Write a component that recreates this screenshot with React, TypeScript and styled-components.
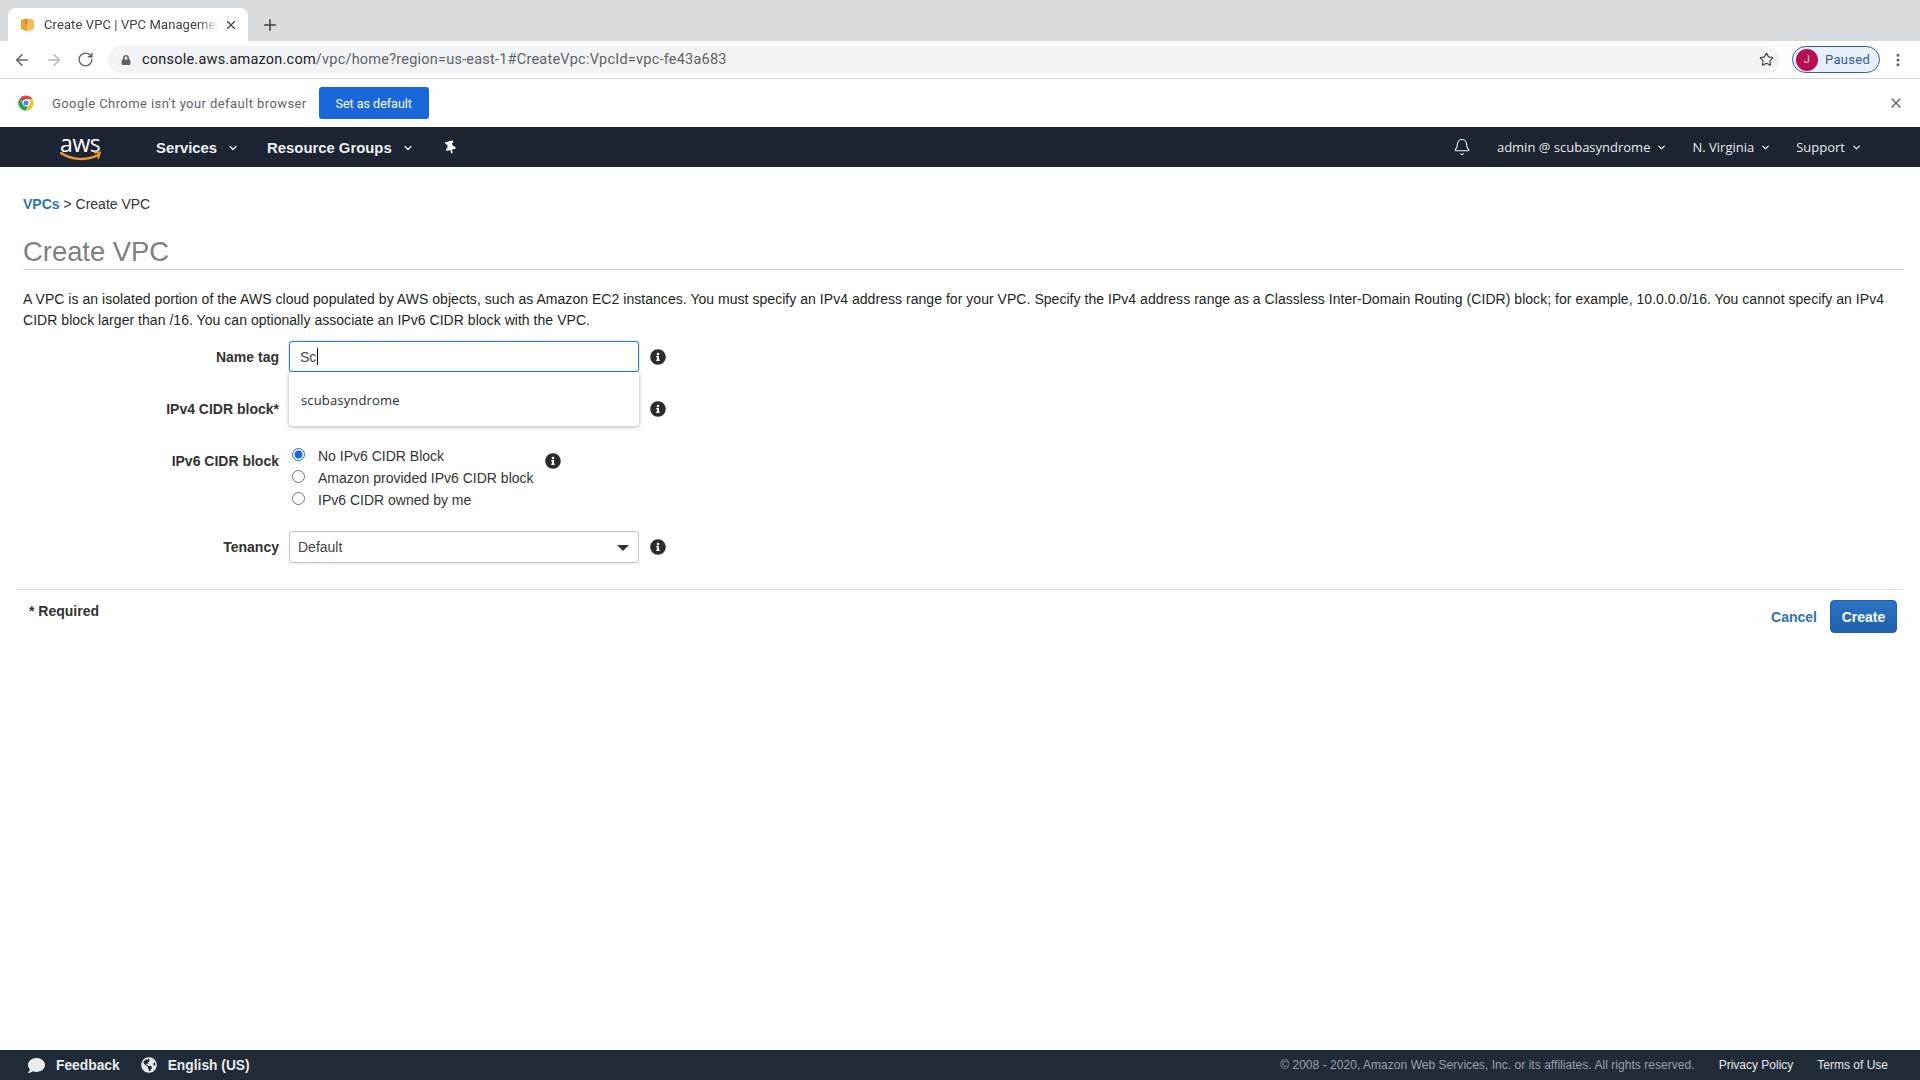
import React from "react";
import styled, { createGlobalStyle } from "styled-components";
import {
  ArrowLeft,
  ArrowRight,
  Bell,
  ChevronDown,
  EllipsisVertical,
  Plus,
  RotateCw,
  Star,
  X
} from "lucide-react";
import { FaComment, FaGlobeAmericas, FaInfoCircle, FaLock, FaThumbtack } from "react-icons/fa";

const GlobalStyle = createGlobalStyle`
  html, body {
    margin: 0;
    padding: 0;
    background: #fff;
  }
  body {
    font-family: "Liberation Sans", Arial, sans-serif;
    color: #16191f;
    font-size: 14px;
  }
  * {
    box-sizing: border-box;
  }
`;

const Page = styled.div`
  width: 1920px;
  height: 1080px;
  display: flex;
  flex-direction: column;
  overflow: hidden;
`;

/* browser chrome */

const TabStrip = styled.div`
  height: 41px;
  background: #d9dcde;
  display: flex;
  align-items: flex-end;
  padding-left: 8px;
  flex-shrink: 0;
`;

const Tab = styled.div`
  width: 240px;
  height: 33px;
  background: #fff;
  border-radius: 8px 8px 0 0;
  display: flex;
  align-items: center;
  padding: 0 10px 0 12px;
  color: #3c4043;
  font-family: Roboto, sans-serif;
  font-size: 13px;
`;

const TabTitle = styled.div`
  flex: 1;
  margin-left: 9px;
  margin-right: 5px;
  white-space: nowrap;
  overflow: hidden;
  letter-spacing: 0.1px;
  -webkit-mask-image: linear-gradient(90deg, #000 88%, transparent);
  mask-image: linear-gradient(90deg, #000 88%, transparent);
`;

const NewTab = styled.div`
  width: 44px;
  height: 33px;
  display: flex;
  align-items: center;
  justify-content: center;
  color: #3c4043;
`;

const Toolbar = styled.div`
  height: 38px;
  background: #fff;
  border-bottom: 1px solid #d6d8db;
  display: flex;
  align-items: center;
  padding: 0 14px 0 13px;
  flex-shrink: 0;
`;

const NavIcon = styled.div<{ $muted?: boolean }>`
  width: 32px;
  display: flex;
  align-items: center;
  justify-content: flex-start;
  color: ${p => (p.$muted ? "#b4b7bb" : "#5f6368")};
`;

const Omnibox = styled.div`
  width: 1672px;
  height: 27px;
  margin-left: -1px;
  background: #f1f3f4;
  border-radius: 14px;
  display: flex;
  align-items: center;
  padding: 0 6px 0 13px;
  font-family: Roboto, sans-serif;
  font-size: 14.5px;
  color: #5f6368;
  letter-spacing: 0.22px;
`;

const UrlText = styled.div`
  flex: 1;
  margin-left: 11px;
  strong {
    font-weight: 400;
    color: #202124;
  }
`;

const ProfilePill = styled.div`
  width: 88px;
  height: 27px;
  margin-left: 12px;
  border: 1px solid #3c5d93;
  border-radius: 14px;
  background: #e8f0fe;
  display: flex;
  align-items: center;
  padding-left: 3px;
  font-family: Roboto, sans-serif;
  font-size: 13px;
  color: #2f5a9c;
  letter-spacing: 0.3px;
  flex-shrink: 0;
`;

const Avatar = styled.div`
  width: 22px;
  height: 22px;
  border-radius: 50%;
  background: #b80f50;
  color: #f6c9da;
  font-size: 11px;
  display: flex;
  align-items: center;
  justify-content: center;
  margin-right: 7px;
`;

const MenuDots = styled.div`
  margin-left: 10px;
  display: flex;
  color: #5f6368;
`;

const InfoBar = styled.div`
  height: 48px;
  background: #fff;
  display: flex;
  align-items: center;
  padding: 0 16px 0 17px;
  font-family: Roboto, sans-serif;
  font-size: 13px;
  color: #5f6368;
  letter-spacing: 0.42px;
  flex-shrink: 0;
`;

const InfoText = styled.div`
  margin-left: 17px;
`;

const DefaultButton = styled.div`
  width: 110px;
  height: 32px;
  margin-left: 12px;
  border-radius: 3px;
  background: #1a67dc;
  color: #fff;
  font-size: 12.5px;
  font-weight: 400;
  letter-spacing: 0;
  display: flex;
  align-items: center;
  justify-content: center;
`;

const InfoClose = styled.div`
  margin-left: auto;
  display: flex;
  color: #5f6368;
`;

/* console nav */

const ConsoleNav = styled.div`
  height: 40px;
  background: #1d2432;
  color: #fff;
  display: flex;
  align-items: center;
  padding-left: 60px;
  flex-shrink: 0;
`;

const Logo = styled.div`
  width: 42px;
  height: 30px;
  position: relative;
  margin-right: 54px;
  font-family: "Open Sans", sans-serif;
  font-size: 23px;
  line-height: 22px;
  letter-spacing: -0.4px;
  color: #fff;
  svg {
    position: absolute;
    left: 0;
    bottom: 0;
  }
`;

const MainMenu = styled.div`
  font-weight: 700;
  font-size: 14.85px;
  display: flex;
  align-items: center;
  gap: 10px;
  margin-right: 28px;
  padding-top: 1px;
  color: #eef0f2;
`;

const PinIcon = styled.div`
  display: flex;
  margin-left: 2px;
  transform: rotate(-15deg);
`;

const NavRight = styled.div`
  margin-left: auto;
  display: flex;
  align-items: center;
  padding-right: 58px;
`;

const BellWrap = styled.div`
  display: flex;
  margin-right: 26px;
  color: #f2f3f5;
`;

const SideMenu = styled.div`
  font-family: "Open Sans", sans-serif;
  font-size: 13px;
  display: flex;
  align-items: center;
  gap: 6px;
  margin-right: 25px;
  color: #e6e8ea;
  &:last-child {
    margin-right: 0;
  }
`;

/* page body */

const Main = styled.div`
  flex: 1;
  padding: 0 16px 0 16px;
  display: flex;
  flex-direction: column;
`;

const Breadcrumb = styled.div`
  padding: 29px 0 0 7px;
  line-height: 16px;
  color: #333;
  a {
    color: #2b75ae;
    font-weight: 700;
    text-decoration: none;
  }
`;

const Title = styled.h1`
  margin: 23px 0 0 7px;
  height: 35px;
  border-bottom: 1px solid #c9cbcc;
  font-size: 27.4px;
  line-height: 33px;
  font-weight: 400;
  color: #7d7f81;
`;

const Intro = styled.p`
  margin: 19px 0 0 7px;
  line-height: 21px;
  color: #1d1f21;
  width: 1865px;
  letter-spacing: 0.04px;
`;

const Form = styled.div`
  margin-top: 10px;
  display: flex;
  flex-direction: column;
`;

const Row = styled.div<{ $mb: number }>`
  display: grid;
  grid-template-columns: 263px 350px auto;
  column-gap: 10px;
  margin-bottom: ${p => p.$mb}px;
  align-items: center;
`;

const Label = styled.label<{ $top?: boolean }>`
  font-weight: 700;
  text-align: right;
  color: #333;
  ${p => (p.$top ? "align-self: start; margin-top: 7px;" : "")}
`;

const Field = styled.div`
  position: relative;
  height: 31px;
`;

const TextInput = styled.div<{ $focus?: boolean }>`
  height: 31px;
  border-radius: 3px;
  border: 1px solid ${p => (p.$focus ? "#3d7fb8" : "#b8bcbf")};
  box-shadow: ${p => (p.$focus ? "0 0 2px rgba(61,127,184,.6)" : "none")};
  background: #fff;
  display: flex;
  align-items: center;
  padding-left: 10px;
  color: #444;
`;

const Caret = styled.span`
  display: inline-block;
  width: 1px;
  height: 17px;
  background: #111;
  margin-left: 1px;
`;

const Suggestions = styled.div`
  position: absolute;
  top: 31px;
  left: 0;
  right: 0;
  height: 54px;
  background: #fff;
  border-radius: 0 0 3px 3px;
  box-shadow: 0 1px 4px rgba(0, 0, 0, 0.3);
  padding: 19px 0 0 12px;
  font-family: "Open Sans", sans-serif;
  font-size: 13px;
  line-height: 18px;
  letter-spacing: 0.15px;
  color: #2a2c2e;
  z-index: 2;
`;

const InfoIcon = styled.div`
  display: flex;
  color: #2a2c2e;
  padding-left: 1px;
`;

const RadioCell = styled.div`
  grid-column: 2 / 4;
  display: flex;
  align-items: flex-start;
`;

const RadioList = styled.div`
  display: flex;
  flex-direction: column;
  margin-top: -1px;
`;

const RadioRow = styled.label`
  height: 22px;
  display: flex;
  align-items: center;
  color: #333;
`;

const Radio = styled.input`
  width: 13px;
  height: 13px;
  margin: -3px 13px 0 3px;
  accent-color: #1a67dc;
`;

const RadioInfo = styled(InfoIcon)`
  margin: 7px 0 0 10px;
`;

const SelectBox = styled(TextInput)`
  height: 32px;
  padding-left: 8px;
  padding-right: 9px;
  justify-content: space-between;
  border-color: #c1c4c6;
  box-shadow: 0 1px 1px rgba(0, 0, 0, 0.08);
`;

const SelectArrow = styled.span`
  width: 0;
  height: 0;
  border-left: 6px solid transparent;
  border-right: 6px solid transparent;
  border-top: 6px solid #333;
  margin-top: 2px;
`;

const FormFooter = styled.div`
  margin-top: 26px;
  border-top: 1px solid #dcdedf;
  display: flex;
  justify-content: space-between;
  padding: 10px 7px 0 13px;
`;

const Required = styled.div`
  font-weight: 700;
  color: #333;
  margin-top: 3px;
  line-height: 16px;
`;

const Actions = styled.div`
  display: flex;
  align-items: center;
  gap: 13px;
`;

const CancelLink = styled.a`
  color: #2b75ae;
  font-weight: 700;
  font-size: 14px;
`;

const CreateButton = styled.button`
  width: 67px;
  height: 33px;
  border: 1px solid #1f5fa8;
  border-radius: 4px;
  background: linear-gradient(#2b74c4, #1f5fae);
  color: #fff;
  font-family: inherit;
  font-weight: 700;
  font-size: 14px;
  padding: 0;
`;

/* console footer */

const Footer = styled.div`
  height: 30px;
  background: #222b38;
  display: flex;
  align-items: center;
  padding: 0 32px 0 28px;
  flex-shrink: 0;
  font-size: 12px;
  color: #fff;
`;

const FooterItem = styled.div`
  display: flex;
  align-items: center;
  gap: 11px;
  font-weight: 700;
  font-size: 13.8px;
  margin-right: 21px;
  color: #e9ebee;
`;

const Copyright = styled.div`
  margin-left: auto;
  color: #9aa0a7;
  margin-right: 24px;
  letter-spacing: 0.04px;
`;

const FooterLink = styled.div`
  color: #e6e8ea;
  margin-right: 24px;
  &:last-child {
    margin-right: 0;
  }
`;

const Favicon = () => (
  <svg width="15" height="15" viewBox="0 0 16 16">
    <path d="M1 3.2 5.6 1.6 8 3v12.4L5 14.4 1 12.9z" fill="#e8a33a" />
    <path d="M15 3.2 10.4 1.6 8 3v12.4l3-1 4-1.5z" fill="#f3bd5c" />
    <path d="M5.6 1.6 8 3v5L5.6 7z" fill="#c9831f" />
  </svg>
);

const ChromeIcon = () => (
  <svg width="18" height="18" viewBox="0 0 48 48">
    <path d="M24 4a20 20 0 0 1 17.3 10H24a10 10 0 0 0-9.6 7.2L7.8 11.5A20 20 0 0 1 24 4z" fill="#db4437" />
    <path d="M41.3 14A20 20 0 0 1 24 44l8.6-15a10 10 0 0 0 .1-15z" fill="#f4c20d" />
    <path d="M24 44A20 20 0 0 1 7.8 11.5L16.4 27a10 10 0 0 0 12.8 4.6z" fill="#2f9e4f" />
    <circle cx="24" cy="24" r="8" fill="#4285f4" stroke="#fff" strokeWidth="2.5" />
  </svg>
);

const Info = () => <FaInfoCircle size={16} />;

export default function App() {
  return (
    <Page>
      <GlobalStyle />
      <TabStrip>
        <Tab>
          <Favicon />
          <TabTitle>Create VPC | VPC Management Console</TabTitle>
          <X size={14} strokeWidth={2} />
        </Tab>
        <NewTab>
          <Plus size={18} strokeWidth={2} />
        </NewTab>
      </TabStrip>
      <Toolbar>
        <NavIcon>
          <ArrowLeft size={18} strokeWidth={2} />
        </NavIcon>
        <NavIcon $muted>
          <ArrowRight size={18} strokeWidth={2} />
        </NavIcon>
        <NavIcon>
          <RotateCw size={17} strokeWidth={2} />
        </NavIcon>
        <Omnibox>
          <FaLock size={10} />
          <UrlText>
            <strong>console.aws.amazon.com</strong>/vpc/home?region=us-east-1#CreateVpc:VpcId=vpc-fe43a683
          </UrlText>
          <Star size={15} strokeWidth={1.8} color="#3c4043" />
        </Omnibox>
        <ProfilePill>
          <Avatar>J</Avatar>
          Paused
        </ProfilePill>
        <MenuDots>
          <EllipsisVertical size={16} strokeWidth={2.5} />
        </MenuDots>
      </Toolbar>
      <InfoBar>
        <ChromeIcon />
        <InfoText>Google Chrome isn't your default browser</InfoText>
        <DefaultButton>Set as default</DefaultButton>
        <InfoClose>
          <X size={16} strokeWidth={2} />
        </InfoClose>
      </InfoBar>
      <ConsoleNav>
        <Logo>
          aws
          <svg width="42" height="11" viewBox="0 0 42 11">
            <path d="M1 2c10 7 26 8 37 2" fill="none" stroke="#f29a2e" strokeWidth="2.4" strokeLinecap="round" />
            <path d="M34 1.5 40 1.5 38 7.5" fill="none" stroke="#f29a2e" strokeWidth="2" strokeLinejoin="round" />
          </svg>
        </Logo>
        <MainMenu>
          Services
          <ChevronDown size={12} strokeWidth={2.5} />
        </MainMenu>
        <MainMenu>
          Resource Groups
          <ChevronDown size={12} strokeWidth={2.5} />
        </MainMenu>
        <PinIcon>
          <FaThumbtack size={13} />
        </PinIcon>
        <NavRight>
          <BellWrap>
            <Bell size={18} strokeWidth={1.5} />
          </BellWrap>
          <SideMenu>
            admin @ scubasyndrome
            <ChevronDown size={11} strokeWidth={3} />
          </SideMenu>
          <SideMenu>
            N. Virginia
            <ChevronDown size={11} strokeWidth={3} />
          </SideMenu>
          <SideMenu>
            Support
            <ChevronDown size={11} strokeWidth={3} />
          </SideMenu>
        </NavRight>
      </ConsoleNav>
      <Main>
        <Breadcrumb>
          <a href="#vpcs">VPCs</a> &gt; Create VPC
        </Breadcrumb>
        <Title>Create VPC</Title>
        <Intro>
          A VPC is an isolated portion of the AWS cloud populated by AWS objects, such as Amazon EC2 instances. You must
          specify an IPv4 address range for your VPC. Specify the IPv4 address range as a Classless Inter-Domain Routing
          (CIDR) block; for example, 10.0.0.0/16. You cannot specify an IPv4 CIDR block larger than /16. You can
          optionally associate an IPv6 CIDR block with the VPC.
        </Intro>
        <Form>
          <Row $mb={21}>
            <Label>Name tag</Label>
            <Field>
              <TextInput $focus>
                Sc
                <Caret />
              </TextInput>
              <Suggestions>scubasyndrome</Suggestions>
            </Field>
            <InfoIcon>
              <Info />
            </InfoIcon>
          </Row>
          <Row $mb={22}>
            <Label>IPv4 CIDR block*</Label>
            <Field>
              <TextInput />
            </Field>
            <InfoIcon>
              <Info />
            </InfoIcon>
          </Row>
          <Row $mb={20}>
            <Label $top>IPv6 CIDR block</Label>
            <RadioCell>
              <RadioList>
                <RadioRow>
                  <Radio type="radio" name="ipv6" defaultChecked />
                  No IPv6 CIDR Block
                </RadioRow>
                <RadioRow>
                  <Radio type="radio" name="ipv6" />
                  Amazon provided IPv6 CIDR block
                </RadioRow>
                <RadioRow>
                  <Radio type="radio" name="ipv6" />
                  IPv6 CIDR owned by me
                </RadioRow>
              </RadioList>
              <RadioInfo>
                <Info />
              </RadioInfo>
            </RadioCell>
          </Row>
          <Row $mb={0}>
            <Label>Tenancy</Label>
            <SelectBox>
              Default
              <SelectArrow />
            </SelectBox>
            <InfoIcon>
              <Info />
            </InfoIcon>
          </Row>
        </Form>
        <FormFooter>
          <Required>* Required</Required>
          <Actions>
            <CancelLink>Cancel</CancelLink>
            <CreateButton>Create</CreateButton>
          </Actions>
        </FormFooter>
      </Main>
      <Footer>
        <FooterItem>
          <FaComment size={17} />
          Feedback
        </FooterItem>
        <FooterItem>
          <FaGlobeAmericas size={16} />
          English (US)
        </FooterItem>
        <Copyright>© 2008 - 2020, Amazon Web Services, Inc. or its affiliates. All rights reserved.</Copyright>
        <FooterLink>Privacy Policy</FooterLink>
        <FooterLink>Terms of Use</FooterLink>
      </Footer>
    </Page>
  );
}
